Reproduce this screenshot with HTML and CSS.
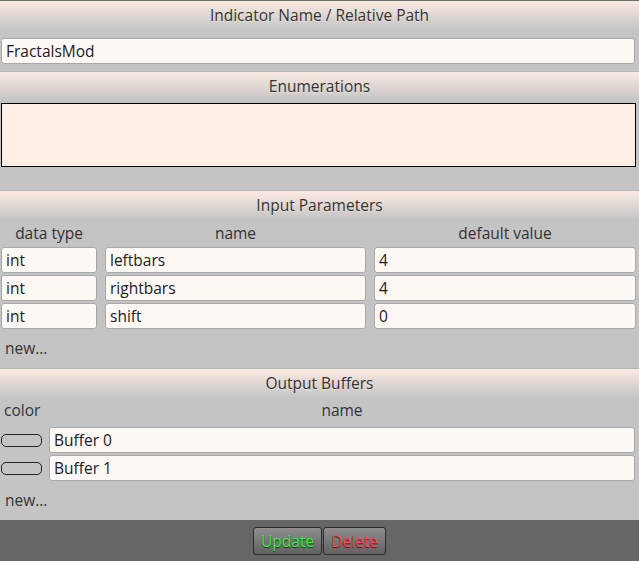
FILE: index.html
```html
<!DOCTYPE html>
<html lang="en">
<head>
  <meta charset="UTF-8">
  <title>Indicator Editor</title>
  <link rel="stylesheet" href="styles.css">
</head>
<body>
  <div class="head first">Indicator Name / Relative Path</div>
  <div class="name-row">
    <input class="field" type="text" value="FractalsMod">
  </div>

  <div class="head">Enumerations</div>
  <div class="enum-row">
    <textarea class="enums"></textarea>
  </div>

  <div class="head">Input Parameters</div>
  <div class="params">
    <div class="col">data type</div>
    <div class="col">name</div>
    <div class="col">default value</div>

    <input class="field" type="text" value="int">
    <input class="field" type="text" value="leftbars">
    <input class="field" type="text" value="4">

    <input class="field" type="text" value="int">
    <input class="field" type="text" value="rightbars">
    <input class="field" type="text" value="4">

    <input class="field" type="text" value="int">
    <input class="field" type="text" value="shift">
    <input class="field" type="text" value="0">
  </div>
  <div class="new">new...</div>

  <div class="head">Output Buffers</div>
  <div class="buffers">
    <div class="col left">color</div>
    <div class="col">name</div>

    <div class="swatch"></div>
    <input class="field" type="text" value="Buffer 0">

    <div class="swatch"></div>
    <input class="field" type="text" value="Buffer 1">
  </div>
  <div class="new">new...</div>

  <div class="footer">
    <button class="btn update">Update</button>
    <button class="btn delete">Delete</button>
  </div>
</body>
</html>
```

FILE: styles.css
```css
html, body { height: 100%; }
body {
  margin: 0; background: #c4c4c4; color: #333;
  font-family: "Open Sans", "Noto Sans", sans-serif; font-size: 15.5px;
  display: flex; flex-direction: column;
}

.head {
  height: 29px; line-height: 29px; text-align: center;
  border-top: 1px solid #b6b6b6;
  background: linear-gradient(#fbeae2, #c4c4c4);
  text-shadow: 0 1px 0 rgba(255,255,255,0.35);
}
.head.first { border-top-color: #6e6e6e; }

.field {
  box-sizing: border-box; height: 26px; margin: 0; padding: 0 4px;
  border: 1px solid #a8a8a8; border-radius: 3px;
  background: #fff9f5; color: #1a1a2a;
  font: inherit; outline: none; min-width: 0;
}

.name-row { padding: 8px 4px 7px 1px; display: flex; }
.name-row .field { flex: 1; }

.enum-row { padding: 2px 3px 23px 1px; display: flex; }
.enums {
  flex: 1; box-sizing: border-box; height: 64px; margin: 0;
  border: 1px solid #000; background: #ffeee6; resize: none;
}

.params {
  display: grid; grid-template-columns: 96px 261px 1fr;
  grid-template-rows: 25px; grid-auto-rows: 26px;
  gap: 2px 8px; padding: 0 3px 0 1px;
}

.col { text-align: center; line-height: 26px; }
.col.left { text-align: left; padding-left: 3px; }

.buffers {
  display: grid; grid-template-columns: 41px 1fr;
  grid-template-rows: 27px; grid-auto-rows: 26px;
  gap: 2px 7px; padding: 0 4px 0 1px;
}
.buffers .col { line-height: 25px; }
.swatch {
  align-self: center; height: 13px; box-sizing: border-box;
  border: 1px solid #222; border-radius: 5px; background: #c4c4c4;
}

.new { height: 39px; line-height: 39px; padding-left: 5px; }

.footer {
  flex: 1; min-height: 40px; background: #666;
  display: flex; justify-content: center; align-items: center; gap: 1px;
}
.btn {
  height: 28px; padding: 0 7px; margin: 0;
  border: 1px solid #2c2c2c; border-radius: 3px;
  background: linear-gradient(#8e8e8e, #626262);
  font: inherit; text-shadow: 0 1px 1px #222;
}
.update { color: #3ef03e; }
.delete { color: #ff4a4a; }
```
